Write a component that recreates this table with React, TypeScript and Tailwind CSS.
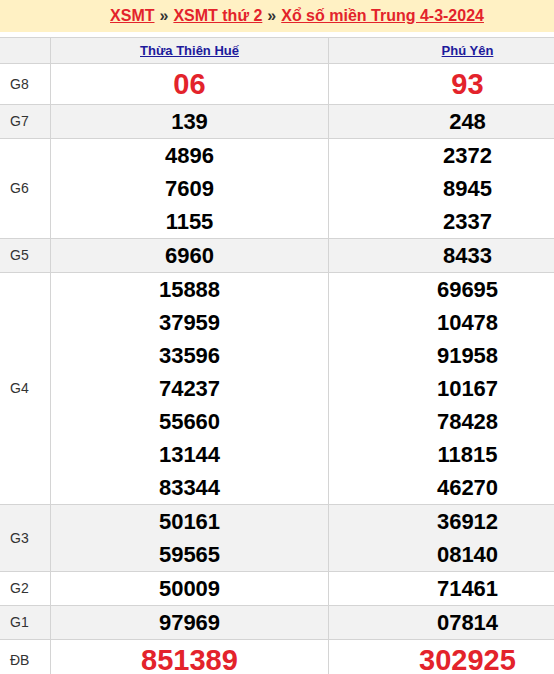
import React from 'react';

type Row = {
    label: string;
    hue: string[];
    phuYen: string[];
    big?: boolean;
    shaded?: boolean;
};

const ROWS: Row[] = [
    { label: 'G8', hue: ['06'], phuYen: ['93'], big: true },
    { label: 'G7', hue: ['139'], phuYen: ['248'], shaded: true },
    { label: 'G6', hue: ['4896', '7609', '1155'], phuYen: ['2372', '8945', '2337'] },
    { label: 'G5', hue: ['6960'], phuYen: ['8433'], shaded: true },
    {
        label: 'G4',
        hue: ['15888', '37959', '33596', '74237', '55660', '13144', '83344'],
        phuYen: ['69695', '10478', '91958', '10167', '78428', '11815', '46270'],
    },
    { label: 'G3', hue: ['50161', '59565'], phuYen: ['36912', '08140'], shaded: true },
    { label: 'G2', hue: ['50009'], phuYen: ['71461'] },
    { label: 'G1', hue: ['97969'], phuYen: ['07814'], shaded: true },
    { label: 'ĐB', hue: ['851389'], phuYen: ['302925'], big: true },
];

function NumberCell({ values, big, last }: { values: string[]; big?: boolean; last?: boolean }) {
    return (
        <div className={`flex flex-col items-center justify-center ${last ? '' : 'border-r border-[#d4d4d4]'}`}>
            {values.map((v) => (
                <span
                    key={v}
                    className={
                        big
                            ? 'text-[29px] font-bold leading-[40px] text-[#e3232b]'
                            : 'text-[22px] font-bold leading-[33px] text-black'
                    }
                >
                    {v}
                </span>
            ))}
        </div>
    );
}

export default function App() {
    return (
        <div className="w-full overflow-hidden bg-white" style={{ fontFamily: '"Liberation Sans", Arial, sans-serif' }}>
            <div className="w-[606px]">
                <div className="flex h-8 items-center justify-center bg-[#fff1c4] pr-[12px] text-[16px] font-bold">
                    <a className="text-[#e3232b] underline">XSMT</a>
                    <span className="mx-[5px] text-[#333]">»</span>
                    <a className="text-[#e3232b] underline">XSMT thứ 2</a>
                    <span className="mx-[5px] text-[#333]">»</span>
                    <a className="text-[#e3232b] underline">Xổ số miền Trung 4-3-2024</a>
                </div>

                <div className="mt-[5px] border-t border-[#d4d4d4]">
                    <div className="grid h-[26px] grid-cols-[51px_278px_277px] border-b border-[#d4d4d4] bg-[#f1f1f1] text-[13px] font-bold">
                        <div className="border-r border-[#d4d4d4]" />
                        <div className="flex items-center justify-center border-r border-[#d4d4d4]">
                            <a className="text-[#1d1a9c] underline">Thừa Thiên Huế</a>
                        </div>
                        <div className="flex items-center justify-center">
                            <a className="text-[#1d1a9c] underline">Phú Yên</a>
                        </div>
                    </div>

                    {ROWS.map((row) => (
                        <div
                            key={row.label}
                            className={`grid grid-cols-[51px_278px_277px] border-b border-[#d4d4d4] ${row.shaded ? 'bg-[#f2f2f2]' : 'bg-white'}`}
                        >
                            <div className="flex items-center border-r border-[#d4d4d4] pl-[10px] text-[14px] text-[#333]">
                                {row.label}
                            </div>
                            <NumberCell values={row.hue} big={row.big} />
                            <NumberCell values={row.phuYen} big={row.big} last />
                        </div>
                    ))}
                </div>
            </div>
        </div>
    );
}
